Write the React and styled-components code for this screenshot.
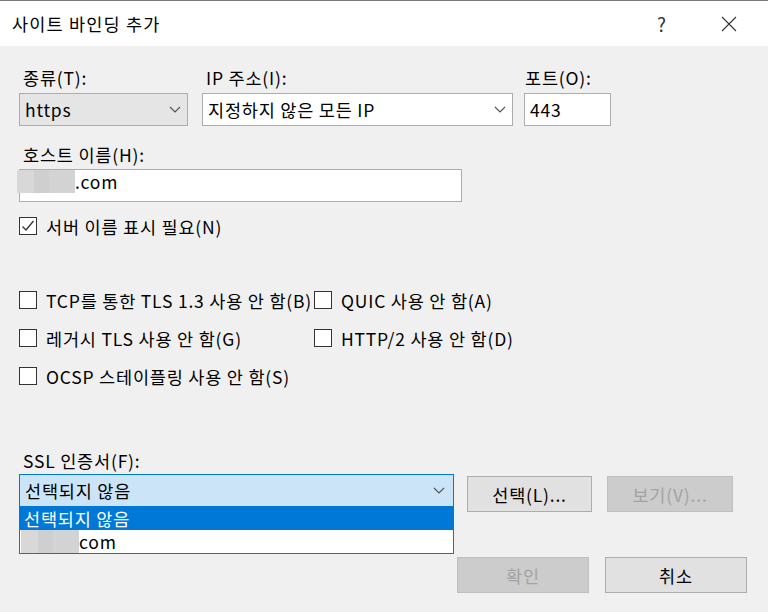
import React from "react";
import styled, { createGlobalStyle } from "styled-components";

const GlobalStyle = createGlobalStyle`
  html, body {
    margin: 0;
    padding: 0;
    background: #f0f0f0;
  }
  body {
    font-family: "Noto Sans CJK KR", "Noto Sans", sans-serif;
    font-size: 17.5px;
    letter-spacing: 0.8px;
    color: #000;
  }
`;

const Dialog = styled.div`
  width: 768px;
  height: 612px;
  display: flex;
  flex-direction: column;
  background: #f0f0f0;
  overflow: hidden;
`;

const TitleBar = styled.div`
  height: 45px;
  border-top: 1px solid #7a7a7a;
  background: #fff;
  display: flex;
  align-items: center;
  padding-left: 12px;
`;

const Title = styled.div`
  flex: 1;
  font-size: 17.5px;
  line-height: 22px;
  letter-spacing: 1.2px;
`;

const TitleButton = styled.div`
  width: ${(p) => p.w}px;
  height: 45px;
  display: flex;
  align-items: center;
  justify-content: center;
  color: #333;
  font-size: 19px;
`;

const Body = styled.div`
  flex: 1;
  padding: 22px 21px 0 19px;
  display: flex;
  flex-direction: column;
`;

const TopRow = styled.div`
  display: grid;
  grid-template-columns: 169px 311px 84px;
  column-gap: 14px;
`;

const Field = styled.div`
  display: flex;
  flex-direction: column;
`;

const Label = styled.div`
  line-height: 20px;
  height: 20px;
  padding-left: 4px;
  white-space: nowrap;
  margin-bottom: ${(p) => p.mb || 5}px;
  margin-top: ${(p) => p.mt || 0}px;
`;

const Box = styled.div`
  position: relative;
  box-sizing: border-box;
  height: 33px;
  width: ${(p) => (p.w ? p.w + "px" : "auto")};
  border: 1px solid ${(p) => (p.focus ? "#0078d7" : "#adadad")};
  background: ${(p) => (p.focus ? "#cce4f7" : p.grey ? "#e5e5e5" : "#fff")};
  display: flex;
  align-items: center;
  padding: 0 6px 0 5px;
  line-height: 20px;
`;

const BoxText = styled.span`
  flex: 1;
  white-space: nowrap;
`;

const Blur = styled.span`
  display: inline-block;
  flex-shrink: 0;
  width: 58px;
  height: 23px;
  margin-left: ${(p) => p.ml || 0}px;
  background: linear-gradient(
    90deg,
    #d8d8d8 0 30%,
    #cfcfcf 30% 55%,
    #d3d3d3 55% 100%
  );
`;

const CheckRow = styled.label`
  display: flex;
  align-items: center;
  height: 20px;
  gap: 9px;
  white-space: nowrap;
  margin-top: ${(p) => p.mt || 0}px;
`;

const CheckBox = styled.span`
  box-sizing: border-box;
  width: 18px;
  height: 18px;
  border: 1px solid #333;
  background: #fff;
  display: flex;
  align-items: center;
  justify-content: center;
  flex-shrink: 0;
`;

const OptionGrid = styled.div`
  display: grid;
  grid-template-columns: 295px auto;
  row-gap: 18px;
  margin-top: 54px;
`;

const SslRow = styled.div`
  display: flex;
  align-items: flex-start;
`;

const Dropdown = styled.div`
  position: absolute;
  top: 32px;
  left: -1px;
  right: -1px;
  border: 1px solid #0078d7;
  border-top: none;
  background: #fff;
`;

const Option = styled.div`
  height: 23px;
  line-height: 23px;
  padding-left: 4px;
  background: ${(p) => (p.selected ? "#0078d7" : "#fff")};
  color: ${(p) => (p.selected ? "#fff" : "#000")};
  display: flex;
  align-items: center;
  white-space: nowrap;
`;

const Button = styled.button`
  box-sizing: border-box;
  width: ${(p) => p.w}px;
  height: 36px;
  margin-left: ${(p) => p.ml || 0}px;
  margin-top: ${(p) => p.mt || 0}px;
  font-family: inherit;
  font-size: 17.5px;
  letter-spacing: 0.8px;
  border: 1px solid ${(p) => (p.disabled ? "#bfbfbf" : "#adadad")};
  background: ${(p) => (p.disabled ? "#cccccc" : "#e1e1e1")};
  color: ${(p) => (p.disabled ? "#a3a3a3" : "#000")};
  padding: 0;
`;

const ButtonRow = styled.div`
  display: flex;
  justify-content: flex-end;
  margin-top: 45px;
`;

const Chevron = () => (
  <svg width="12" height="7" viewBox="0 0 12 7">
    <path d="M1 1l5 5 5-5" fill="none" stroke="#555" strokeWidth="1.2" />
  </svg>
);

const Check = () => (
  <svg width="14" height="14" viewBox="0 0 14 14">
    <path d="M1.5 7.5l3.5 3.5 7.5-9" fill="none" stroke="#333" strokeWidth="1.3" />
  </svg>
);

const Close = () => (
  <svg width="16" height="16" viewBox="0 0 16 16">
    <path d="M1 1l14 14M15 1L1 15" stroke="#333" strokeWidth="1.1" />
  </svg>
);

function Checkbox({ checked, children, mt }) {
  return (
    <CheckRow mt={mt}>
      <CheckBox>{checked && <Check />}</CheckBox>
      <span>{children}</span>
    </CheckRow>
  );
}

export default function App() {
  return (
    <Dialog>
      <GlobalStyle />
      <TitleBar>
        <Title>사이트 바인딩 추가</Title>
        <TitleButton w={40}>?</TitleButton>
        <TitleButton w={50} style={{ marginLeft: 22, marginRight: 14 }}>
          <Close />
        </TitleButton>
      </TitleBar>
      <Body>
        <TopRow>
          <Field>
            <Label>종류(T):</Label>
            <Box grey>
              <BoxText>https</BoxText>
              <Chevron />
            </Box>
          </Field>
          <Field>
            <Label>IP 주소(I):</Label>
            <Box>
              <BoxText>지정하지 않은 모든 IP</BoxText>
              <Chevron />
            </Box>
          </Field>
          <Field style={{ marginLeft: -3 }}>
            <Label style={{ paddingLeft: 1 }}>포트(O):</Label>
            <Box>
              <BoxText>443</BoxText>
            </Box>
          </Field>
        </TopRow>

        <Label mt={19} mb={4}>호스트 이름(H):</Label>
        <Box w={443} style={{ paddingLeft: 0, alignItems: "flex-start" }}>
          <Blur ml={-3} />
          <BoxText style={{ lineHeight: "24px" }}>.com</BoxText>
        </Box>

        <Checkbox checked mt={14}>
          서버 이름 표시 필요(N)
        </Checkbox>

        <OptionGrid>
          <Checkbox>TCP를 통한 TLS 1.3 사용 안 함(B)</Checkbox>
          <Checkbox>QUIC 사용 안 함(A)</Checkbox>
          <Checkbox>레거시 TLS 사용 안 함(G)</Checkbox>
          <Checkbox>HTTP/2 사용 안 함(D)</Checkbox>
          <Checkbox>OCSP 스테이플링 사용 안 함(S)</Checkbox>
        </OptionGrid>

        <Label mt={65} mb={3}>SSL 인증서(F):</Label>
        <SslRow>
          <Box w={435} focus style={{ paddingRight: 8 }}>
            <BoxText>선택되지 않음</BoxText>
            <Chevron />
            <Dropdown>
              <Option selected>선택되지 않음</Option>
              <Option>
                <Blur ml={-3} />
                <span>com</span>
              </Option>
            </Dropdown>
          </Box>
          <Button w={125} ml={13} mt={2}>
            선택(L)...
          </Button>
          <Button w={126} ml={15} mt={2} disabled>
            보기(V)...
          </Button>
        </SslRow>

        <ButtonRow>
          <Button w={132} disabled>
            확인
          </Button>
          <Button w={142} ml={16}>
            취소
          </Button>
        </ButtonRow>
      </Body>
    </Dialog>
  );
}
